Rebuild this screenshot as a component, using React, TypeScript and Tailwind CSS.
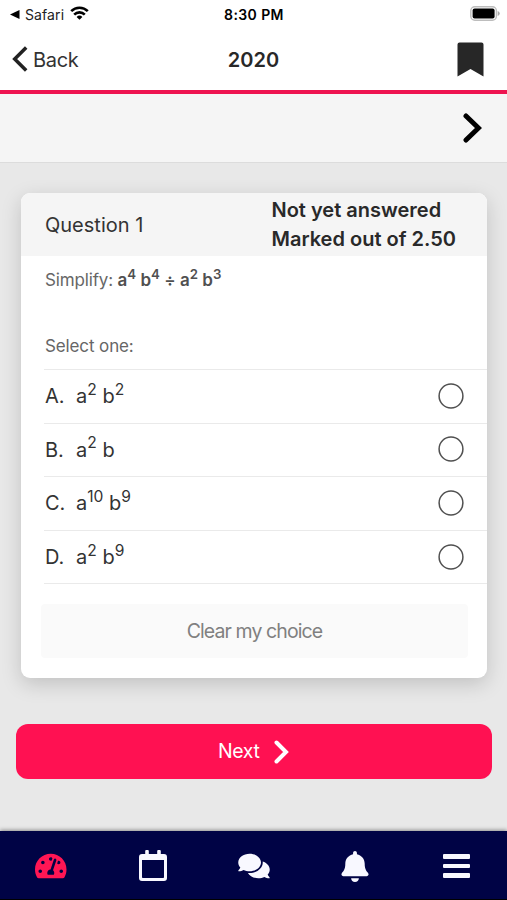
import React from "react";
import { FaTachometerAlt, FaComments, FaBell } from "react-icons/fa";

type Term = { base: string; exp?: string };

const options: { letter: string; terms: Term[] }[] = [
  { letter: "A.", terms: [{ base: "a", exp: "2" }, { base: "b", exp: "2" }] },
  { letter: "B.", terms: [{ base: "a", exp: "2" }, { base: "b" }] },
  { letter: "C.", terms: [{ base: "a", exp: "10" }, { base: "b", exp: "9" }] },
  { letter: "D.", terms: [{ base: "a", exp: "2" }, { base: "b", exp: "9" }] },
];

function Power({ base, exp }: Term) {
  return (
    <span>
      {base}
      {exp && <sup className="top-[-0.54em] text-[78%]">{exp}</sup>}
    </span>
  );
}

function StatusBar() {
  return (
    <div className="grid h-7 grid-cols-3 items-center pr-[7px] pl-[10px] text-black">
      <div className="flex items-center">
        <svg width="10" height="9" viewBox="0 0 10 9">
          <path d="M0 4.5 9.5 0v9z" />
        </svg>
        <span className="ml-[5px] text-[14px] tracking-[0.1px] text-[#222]">Safari</span>
        <svg className="mb-[3px] ml-[6px]" width="19" height="14" viewBox="0 0 19 14" fill="none" stroke="black" strokeWidth="2.6">
          <path d="M1.2 5.2a11.8 11.8 0 0 1 16.6 0" />
          <path d="M4.2 8.6a7.5 7.5 0 0 1 10.6 0" />
          <path d="M9.5 13.8 6.6 10.9a4.1 4.1 0 0 1 5.800 0z" fill="black" stroke="none" />
        </svg>
      </div>
      <div className="pr-[2px] text-center text-[14px] font-semibold tracking-[0.4px] whitespace-nowrap">8:30 PM</div>
      <svg className="mb-[2px] justify-self-end" width="30" height="15" viewBox="0 0 30 15">
        <rect x="0.8" y="0.8" width="25.6" height="13.4" rx="4" fill="white" stroke="#bdbdbd" strokeWidth="1.4" />
        <rect x="2.6" y="2.6" width="22" height="9.8" rx="2" />
        <path d="M27.7 5v5q2-.8 2-2.500t-2-2.500z" fill="#aaa" />
      </svg>
    </div>
  );
}

function Header() {
  return (
    <header className="grid h-[62px] grid-cols-3 items-center pr-[23px] pl-3">
      <div className="flex items-center">
        <svg width="16" height="26" viewBox="0 0 16 26" fill="none" stroke="#222" strokeWidth="3.5">
          <path d="M14.2 1.5 2.7 13l11.5 11.5" />
        </svg>
        <span className="ml-[5px] pt-px text-[20px] tracking-[-0.3px] text-[#333]">Back</span>
      </div>
      <h1 className="pt-px pl-[11px] text-center text-[20px] font-semibold text-[#282828]">2020</h1>
      <svg className="justify-self-end" width="27" height="35" viewBox="0 0 27 35" fill="#272727">
        <path d="M2.5.5h22q2 0 2 2v32l-13-7.4-13 7.4v-32q0-2 2-2z" />
      </svg>
    </header>
  );
}

function QuestionCard() {
  return (
    <section className="mr-5 ml-[20.5px] mt-[30px] h-[485px] overflow-hidden rounded-[9px] bg-white shadow-[0_6px_20px_rgba(0,0,0,0.17)]">
      <div className="flex h-[63px] items-center bg-[#f5f5f5] pl-[24.5px] text-[20px]">
        <h2 className="w-[226.5px] pt-px text-[20px] text-[#333]">Question 1</h2>
        <div className="text-[20px] leading-[29px] font-semibold whitespace-nowrap text-[#292929]">
          <div>Not yet answered</div>
          <div>Marked out of 2.50</div>
        </div>
      </div>
      <div className="pl-[23.5px]">
        <p className="pt-[11px] pl-px text-[17px] leading-[26px] text-[#666]">
          <span className="tracking-[-0.15px]">Simplify: </span>
          <b className="font-semibold text-[#505050]">
            <Power base="a" exp="4" /> <Power base="b" exp="4" /> ÷ <Power base="a" exp="2" />{" "}
            <Power base="b" exp="3" />
          </b>
        </p>
        <p className="mt-[40px] mb-[10px] pl-px text-[17px] leading-[26px] tracking-[-0.12px] text-[#666]">Select one:</p>
        <ul className="border-t border-[#eaeaea]">
          {options.map(({ letter, terms }) => (
            <li key={letter} className="flex h-[53.600px] items-center border-b border-[#eaeaea] pr-[23.500px] pl-px text-[20px] text-[#333]">
              <span className="w-[31px]">{letter}</span>
              <span className="flex-1">
                {terms.map((t, i) => (
                  <React.Fragment key={i}>
                    {i > 0 && " "}
                    <Power {...t} />
                  </React.Fragment>
                ))}
              </span>
              <svg className="mb-px" width="26" height="26" viewBox="0 0 26 26" fill="none" stroke="#505050" strokeWidth="1.500">
                <circle cx="13" cy="13" r="11.900" />
              </svg>
            </li>
          ))}
        </ul>
      </div>
      <button className="mt-[20px] ml-[20.500px] block h-[54px] w-[427px] rounded-sm bg-[#fafafa] text-[19.500px] tracking-[-0.900px] text-[#808080]">
        Clear my choice
      </button>
    </section>
  );
}

function TabBar() {
  return (
    <nav className="flex h-[69px] items-center justify-around border-b border-black bg-[#000345] pt-[2px] text-[#f8f8ff] shadow-[0_-1px_4px_rgba(0,0,0,0.4)]">
      <div className="flex w-[101px] justify-center pl-px">
        <FaTachometerAlt className="h-7 w-[31.500px] text-[#ff1654]" />
      </div>
      <div className="flex w-[101px] justify-center pl-[2px]">
        <svg width="28" height="32" viewBox="0 0 28 32" fill="currentColor">
          <path d="M3 4h3.2V1q0-1 1-1h1.6q1 0 1 1v3h8.400V1q0-1 1-1h1.600q1 0 1 1v3H25q3 0 3 3v21q0 3-3 3H3q-3 0-3-3V7q0-3 3-3zm0 6v17.200q0 .8.800.800h20.400q.800 0 .800-.800V10z" fillRule="evenodd" />
        </svg>
      </div>
      <div className="flex w-[101px] justify-center pl-px">
        <FaComments className="h-[28px] w-[32px]" />
      </div>
      <div className="flex w-[101px] justify-center">
        <FaBell className="h-[31px] w-[28px]" />
      </div>
      <div className="flex w-[101px] justify-center">
        <div className="flex flex-col gap-[5px]">
          <i className="h-[4.800px] w-[27px] rounded-[1px] bg-current" />
          <i className="h-[4.800px] w-[27px] rounded-[1px] bg-current" />
          <i className="h-[4.800px] w-[27px] rounded-[1px] bg-current" />
        </div>
      </div>
    </nav>
  );
}

export default function App() {
  return (
    <div className="flex h-[900px] w-[507px] flex-col overflow-hidden bg-white font-['Inter','Liberation_Sans',sans-serif]">
      <StatusBar />
      <Header />
      <div className="flex h-[73px] items-center justify-end border-t-4 border-b border-t-[#ee1450] border-b-[#dcdcdc] bg-[#f5f5f5] pr-[25px]">
        <svg width="19" height="30" viewBox="0 0 19 30" fill="none" stroke="black" strokeWidth="5" strokeLinecap="round">
          <path d="M3 3l12.500 12L3 27" />
        </svg>
      </div>
      <main className="flex-1 bg-[#e8e8e8]">
        <QuestionCard />
        <button className="mt-[46px] ml-[15.500px] flex h-[55px] w-[476.500px] items-center justify-center rounded-xl bg-[#ff1152] text-[19.500px] tracking-[-0.400px] text-white">
          <span className="pt-px">Next</span>
          <svg className="ml-[15px]" width="15" height="24" viewBox="0 0 15 24" fill="none" stroke="white" strokeWidth="4" strokeLinecap="round">
            <path d="M2.500 2.500 12 12l-9.500 9.500" />
          </svg>
        </button>
      </main>
      <TabBar />
    </div>
  );
}
